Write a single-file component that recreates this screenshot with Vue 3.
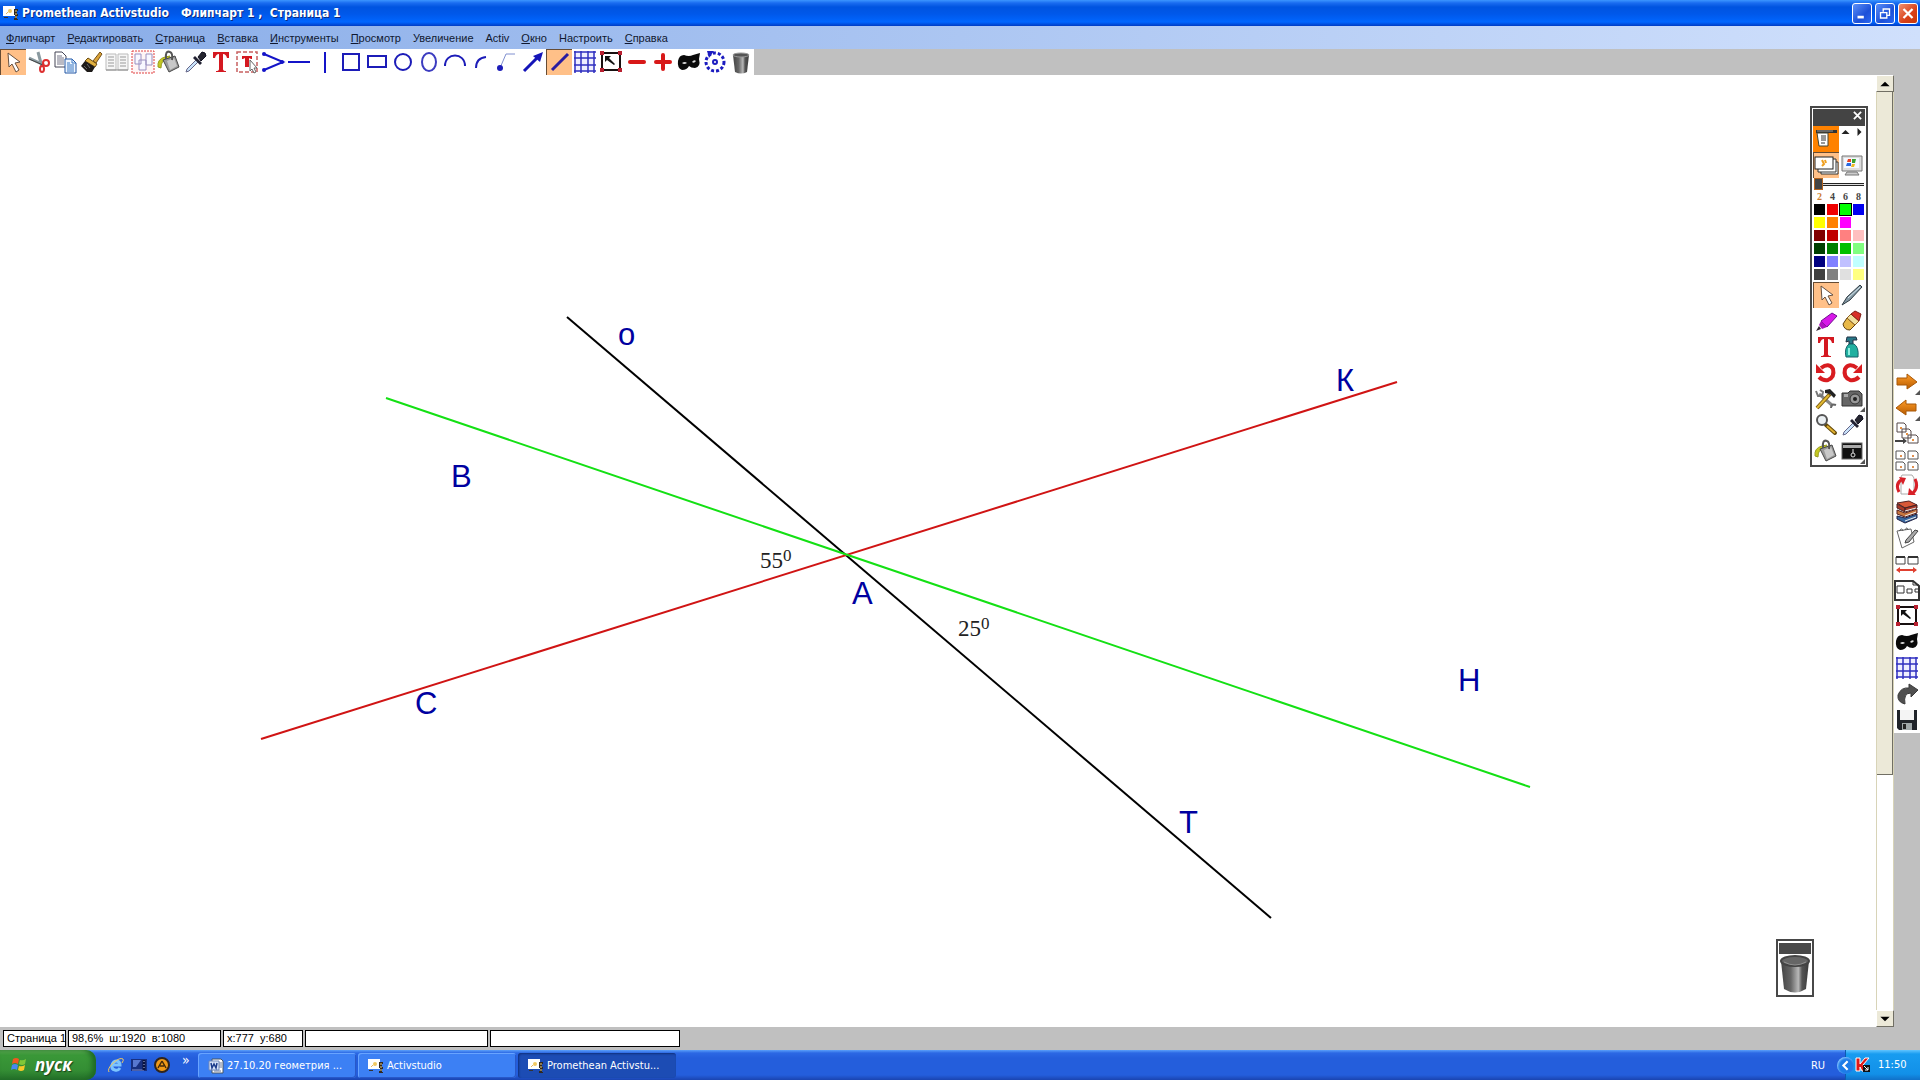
<script setup>
import { ref } from 'vue'

const menus = [
  ['Ф', 'липчарт'], ['Р', 'едактировать'], ['С', 'траница'], ['В', 'ставка'],
  ['И', 'нструменты'], ['П', 'росмотр'], ['', 'Увеличение'], ['', 'Activ'],
  ['О', 'кно'], ['', 'Настроить'], ['С', 'правка'],
]

const toolbar = [
  'pointer', 'scissors', 'copy', 'brush', 'pages', 'pick-pages', 'bucket', 'dropper',
  'text', 'text-select', 'polyline', 'hline', 'vline', 'square', 'rect', 'circle',
  'ellipse', 'arc', 'arc-small', 'connector', 'arrow', 'line', 'grid', 'resize',
  'minus', 'plus', 'mask', 'spin', 'trash',
]
const activeTools = ['pointer', 'line']

const side = [
  'next', 'prev', 'page-stack', 'page-grid', 'page-reset', 'books', 'notes',
  'page-width', 'page-tab', 'resize', 'mask', 'grid', 'redo-dark', 'save',
]

const widths = [2, 4, 6, 8]
const penWidth = ref(2)

const colors = [
  '#000000', '#f00000', '#00ff00', '#0000f0',
  '#ffff00', '#ff8000', '#ff00ff', '#ffffff',
  '#800000', '#c00000', '#ff8080', '#ffc0c0',
  '#004000', '#008000', '#00c000', '#80ff80',
  '#000080', '#8080ff', '#c0c0ff', '#c0ffff',
  '#404040', '#808080', '#e0e0e0', '#ffff80',
]
const color = ref('#00ff00')

const paletteTools = [
  'pointer', 'pen', 'marker', 'eraser', 'text', 'spray', 'undo', 'redo',
  'tools', 'camera', 'magnifier', 'dropper', 'bucket', 'drawer',
]

const labels = [
  { t: 'о', x: 618, y: 270 }, { t: 'К', x: 1336, y: 316 },
  { t: 'В', x: 451, y: 412 }, { t: 'А', x: 852, y: 529 },
  { t: 'С', x: 415, y: 639 }, { t: 'Н', x: 1458, y: 616 },
  { t: 'Т', x: 1179, y: 758 },
]
const angles = [{ t: '55', x: 760, y: 493 }, { t: '25', x: 958, y: 561 }]

const tasks = [
  { icon: 'word', text: '27.10.20 геометрия ...' },
  { icon: 'app', text: 'Activstudio' },
  { icon: 'app', text: 'Promethean Activstu...', active: true },
]
</script>

<template>
  <div class="desktop">
    <svg class="sprite" aria-hidden="true">
      <defs>
        <linearGradient id="metal" x1="0" x2="1" y1="0" y2="0">
          <stop offset="0" stop-color="#444" /><stop offset="0.35" stop-color="#666" />
          <stop offset="0.62" stop-color="#b8b8b8" /><stop offset="0.75" stop-color="#555" />
          <stop offset="1" stop-color="#3a3a3a" />
        </linearGradient>
        <linearGradient id="orange" x1="0" x2="0" y1="0" y2="1">
          <stop offset="0" stop-color="#ff9c28" /><stop offset="1" stop-color="#b85c00" />
        </linearGradient>
      </defs>
      <symbol id="i-pointer" viewBox="0 0 26 26">
        <path d="M8 4L9 18L12 15L16 23L19 21L15 14L20 13Z" fill="#fff" stroke="#665040" stroke-width="1" />
      </symbol>
      <symbol id="i-scissors" viewBox="0 0 26 26">
        <path d="M3 9L18 16M12 3L16 18" stroke="#8a9aa0" stroke-width="3" />
        <path d="M3 10L17 16" stroke="#444" stroke-width="1" />
        <circle cx="20" cy="14" r="3" fill="none" stroke="#dd3030" stroke-width="2" />
        <ellipse cx="16" cy="20" rx="2" ry="3" fill="none" stroke="#dd3030" stroke-width="2" />
      </symbol>
      <symbol id="i-copy" viewBox="0 0 26 26">
        <path d="M3 3H10L14 7V18H3Z" fill="#fff" stroke="#445" />
        <path d="M5 7H10M5 9H12M5 11H12M5 13H12M5 15H12" stroke="#778" />
        <path d="M13 10H20L24 14V24H13Z" fill="#eef6ff" stroke="#2256a4" />
        <path d="M20 10V14H24M15 14H18M15 16H22M15 18H22M15 20H22M15 22H22" fill="none" stroke="#3a78c4" />
      </symbol>
      <symbol id="i-brush" viewBox="0 0 26 26">
        <path d="M15 12L22 3L24 5L18 14Z" fill="#dba438" stroke="#74501a" />
        <path d="M10 9L19 15L17 18L7 12Z" fill="#e0b040" stroke="#6a4a10" />
        <path d="M7 12L17 18L14 23L9 23L3 17Z" fill="#1d1a18" />
        <path d="M6 17L9 20M9 15L12 19" stroke="#666" />
      </symbol>
      <symbol id="i-pages" viewBox="0 0 26 26">
        <path d="M2 5H12V21H2ZM14 5H24V21H14Z" fill="#f6f6f6" stroke="#bbb" />
        <path d="M4 8H10M4 11H10M4 14H10M4 17H10M16 8H22M16 11H22M16 14H22M16 17H22" stroke="#999" />
        <path d="M2 21H24" stroke="#888" />
      </symbol>
      <symbol id="i-pick-pages" viewBox="0 0 26 26">
        <rect x="2" y="2" width="22" height="22" fill="#fff5f5" stroke="#e04040" stroke-dasharray="2 1" />
        <path d="M5 5H11V15H5ZM16 5H22V16H16ZM9 11H16V21H9Z" fill="#f8f8ff" stroke="#9a90c0" />
      </symbol>
      <symbol id="i-bucket" viewBox="0 0 26 26">
        <path d="M2 18Q1 10 9 8L14 7L12 11Q5 10 5 19Z" fill="#c4c820" stroke="#989c20" />
        <path d="M7 11L19 7L23 18L13 23Z" fill="#999" stroke="#484848" />
        <path d="M11 12L18 9L21 17L14 21Z" fill="#c8c8c8" />
        <path d="M10 10Q9 1 14 3Q17 4 16 11" fill="none" stroke="#555" stroke-width="2" />
      </symbol>
      <symbol id="i-dropper" viewBox="0 0 26 26">
        <path d="M15 10L17 12L7 22L4 23L5 20Z" fill="#c8e2fa" stroke="#668" />
        <path d="M13 7L20 14L18 16L11 9Z" fill="#223" />
        <path d="M16 8L20 3Q24 3 24 7L19 12Z" fill="#25252f" stroke="#112" />
      </symbol>
      <symbol id="i-text" viewBox="0 0 26 26">
        <path d="M5 3H21V9H19Q18 5 15 5V20Q15 22 18 22V23H8V22Q11 22 11 20V5Q8 5 7 9H5Z" fill="#d41820" />
      </symbol>
      <symbol id="i-text-select" viewBox="0 0 26 26">
        <rect x="3" y="3" width="20" height="20" fill="none" stroke="#c86060" stroke-width="1.5" stroke-dasharray="4 2" />
        <path d="M8 7H18V10H17L15 9V18H11V9L9 10H8Z" fill="#d41820" />
        <path d="M16 11V22L18 20L20 24L22 23L20 19H23Z" fill="#fff" stroke="#666" />
      </symbol>
      <symbol id="i-polyline" viewBox="0 0 26 26">
        <path d="M4 5L23 13L4 21" fill="none" stroke="#1414c8" stroke-width="2" />
        <circle cx="4" cy="5" r="2" fill="#1414c8" /><circle cx="4" cy="21" r="2" fill="#1414c8" /><circle cx="22" cy="13" r="2" fill="#1414c8" />
      </symbol>
      <symbol id="i-hline" viewBox="0 0 26 26"><path d="M2 13H24" stroke="#1414c8" stroke-width="2" /></symbol>
      <symbol id="i-vline" viewBox="0 0 26 26"><path d="M13 3V24" stroke="#1414c8" stroke-width="2" /></symbol>
      <symbol id="i-square" viewBox="0 0 26 26"><rect x="5" y="5" width="16" height="16" fill="none" stroke="#1c1cb8" stroke-width="2" /></symbol>
      <symbol id="i-rect" viewBox="0 0 26 26"><rect x="4" y="7" width="18" height="11" fill="none" stroke="#1c1cb8" stroke-width="2" /></symbol>
      <symbol id="i-circle" viewBox="0 0 26 26"><circle cx="13" cy="13" r="8" fill="none" stroke="#1c1cb8" stroke-width="2" /></symbol>
      <symbol id="i-ellipse" viewBox="0 0 26 26"><ellipse cx="13" cy="13" rx="7" ry="9" fill="none" stroke="#3c3cc0" stroke-width="2" /></symbol>
      <symbol id="i-arc" viewBox="0 0 26 26"><path d="M3 17C3 3 23 3 23 17" fill="none" stroke="#1c1cb8" stroke-width="2" /></symbol>
      <symbol id="i-arc-small" viewBox="0 0 26 26"><path d="M8 19Q8 9 18 8" fill="none" stroke="#1c1cb8" stroke-width="2" /></symbol>
      <symbol id="i-connector" viewBox="0 0 26 26">
        <path d="M6 19L12 5H21" fill="none" stroke="#8090d0" /><circle cx="6" cy="19" r="3" fill="#1c1cb8" />
      </symbol>
      <symbol id="i-arrow" viewBox="0 0 26 26">
        <path d="M4 22L17 9" stroke="#1414b8" stroke-width="3" /><path d="M23 3L20 13L13 7Z" fill="#1414b8" />
      </symbol>
      <symbol id="i-line" viewBox="0 0 26 26"><path d="M6 21L22 5" stroke="#2a1ca0" stroke-width="3" /></symbol>
      <symbol id="i-grid" viewBox="0 0 26 26">
        <rect x="3" y="3" width="20" height="20" fill="#eef" />
        <path d="M2 3H24M2 9H24M2 16H24M2 22H24M3 2V24M9 2V24M16 2V24M22 2V24" stroke="#3030c0" stroke-width="1.5" />
      </symbol>
      <symbol id="i-resize" viewBox="0 0 26 26">
        <rect x="4" y="4" width="18" height="17" fill="#fff" stroke="#181010" stroke-width="2" />
        <path d="M7 7H13L11 9L17 15L16 16L9 11L7 13Z" fill="#111" />
        <path d="M2 2H6V6H2ZM20 2H24V6H20ZM2 19H6V23H2ZM20 19H24V23H20Z" fill="#b82030" />
      </symbol>
      <symbol id="i-minus" viewBox="0 0 26 26"><path d="M6 13H20" stroke="#d81818" stroke-width="4" stroke-linecap="round" /></symbol>
      <symbol id="i-plus" viewBox="0 0 26 26"><path d="M6 13H20M13 6V20" stroke="#d81818" stroke-width="4" stroke-linecap="round" /></symbol>
      <symbol id="i-mask" viewBox="0 0 26 26">
        <path d="M2 12Q3 6 8 6Q13 8 17 6L24 4L23 10Q25 18 19 19Q15 19 13 17Q11 21 6 21Q1 19 2 12Z" fill="#0a0a0a" />
        <path d="M6 14Q9 12 11 14Q8 16 6 14ZM16 13Q18 10 20 12Q18 15 16 13Z" fill="#ddd" />
      </symbol>
      <symbol id="i-spin" viewBox="0 0 26 26">
        <circle cx="13" cy="13" r="9" fill="none" stroke="#1c1cc0" stroke-width="3" stroke-dasharray="3 2" />
        <circle cx="13" cy="13" r="2" fill="none" stroke="#1c1cc0" stroke-width="2" /><path d="M5 2L12 2L7 9Z" fill="#1c1cc0" />
      </symbol>
      <symbol id="i-trash" viewBox="0 0 26 26">
        <path d="M5 6H21L19 23Q13 26 7 23Z" fill="url(#metal)" />
        <ellipse cx="13" cy="6" rx="8" ry="2" fill="#555" stroke="#999" />
      </symbol>
      <symbol id="i-pen" viewBox="0 0 26 26">
        <path d="M3 23L8 15L21 3L23 5L11 18Z" fill="#8498a4" stroke="#303c44" /><path d="M9 16L21 5" stroke="#d6e8ee" />
      </symbol>
      <symbol id="i-marker" viewBox="0 0 26 26">
        <path d="M8 13L19 5L24 8L14 19Z" fill="#d818e8" stroke="#701090" />
        <path d="M8 13L14 19L9 21L6 17Z" fill="#b010c0" /><path d="M6 18L8 21L3 23Z" fill="#302030" />
      </symbol>
      <symbol id="i-eraser" viewBox="0 0 26 26">
        <path d="M4 16L8 10L16 17L11 22Q5 22 4 16Z" fill="#e8b848" stroke="#604010" />
        <path d="M8 10L12 6L20 13L16 17Z" fill="#f0e0a0" stroke="#906020" />
        <path d="M12 6L16 3L22 6L20 13Z" fill="#d83028" stroke="#802018" />
      </symbol>
      <symbol id="i-spray" viewBox="0 0 26 26">
        <path d="M8 3H17L18 6H14V10H10V7L7 8Z" fill="#287888" stroke="#234" />
        <path d="M10 10H15Q20 13 19 23H7Q5 14 10 10Z" fill="#20b0a0" stroke="#166068" /><path d="M10 14V21" stroke="#90eee0" stroke-width="2" />
      </symbol>
      <symbol id="i-undo" viewBox="0 0 26 26">
        <path d="M8 8Q16 2 20 9Q22 17 15 20Q10 21 6 17" fill="none" stroke="#d81c20" stroke-width="4" /><path d="M3 4V13H12Z" fill="#d81c20" />
      </symbol>
      <symbol id="i-redo" viewBox="0 0 26 26">
        <path d="M18 8Q10 2 6 9Q4 17 11 20Q16 21 20 17" fill="none" stroke="#d81c20" stroke-width="4" /><path d="M23 4V13H14Z" fill="#d81c20" />
      </symbol>
      <symbol id="i-tools" viewBox="0 0 26 26">
        <path d="M6 8L20 20" stroke="#888" stroke-width="3" /><path d="M3 5L5 10L9 10L10 6L7 4" fill="none" stroke="#777" stroke-width="2" />
        <path d="M4 22L17 8" stroke="#795810" stroke-width="4" /><path d="M4 22L16 9" stroke="#e0b830" stroke-width="2" />
        <path d="M12 4L17 3L23 9L21 12L17 8L12 7Z" fill="#222" /><path d="M18 22Q18 17 23 19" fill="none" stroke="#666" stroke-width="2" />
      </symbol>
      <symbol id="i-camera" viewBox="0 0 26 26">
        <path d="M3 7H9L11 5H20L23 8V20H3Z" fill="#666" stroke="#333" /><path d="M5 8H9V11H5Z" fill="#aaa" />
        <circle cx="16" cy="13" r="5" fill="#999" stroke="#333" /><circle cx="16" cy="13" r="2" fill="#222" />
        <path d="M26 21V26H21Z" fill="#555" />
      </symbol>
      <symbol id="i-magnifier" viewBox="0 0 26 26">
        <path d="M13 13L22 21" stroke="#624808" stroke-width="4" stroke-linecap="round" /><path d="M14 14L22 21" stroke="#e0b030" stroke-width="2" />
        <circle cx="9" cy="8" r="5" fill="#eaeff2" stroke="#555" stroke-width="2" />
      </symbol>
      <symbol id="i-drawer" viewBox="0 0 26 26">
        <rect x="3" y="5" width="20" height="16" fill="#111" stroke="#666" /><path d="M4 7H22V10H4Z" fill="#aaa" />
        <path d="M14 11V15" stroke="#eee" /><circle cx="14" cy="17" r="2" fill="none" stroke="#ddd" /><path d="M26 21V26H21Z" fill="#555" />
      </symbol>
      <symbol id="i-next" viewBox="0 0 26 26">
        <path d="M3 9H13V5L23 13L13 20V16H3Z" fill="url(#orange)" stroke="#a85808" /><path d="M26 21V26H21Z" fill="#555" />
      </symbol>
      <symbol id="i-prev" viewBox="0 0 26 26">
        <path d="M22 9H12V5L2 13L12 20V16H22Z" fill="url(#orange)" stroke="#a85808" /><path d="M26 21V26H21Z" fill="#555" />
      </symbol>
      <symbol id="i-page-stack" viewBox="0 0 26 26">
        <path d="M3 2H10L12 4V11H3ZM8 8H15L17 10V17H8ZM14 14H22L24 16V22H14Z" fill="#fff" stroke="#554848" />
        <path d="M6 7H8M12 13H14M18 19H20" stroke="#e89040" stroke-width="2" /><path d="M1 19H9V17L13 20L9 23V21H1Z" fill="#444" />
      </symbol>
      <symbol id="i-page-grid" viewBox="0 0 26 26">
        <path d="M2 4H9L11 6V12H2ZM14 4H22L24 6V12H14ZM2 15H9L11 17V23H2ZM14 15H22L24 17V23H14Z" fill="#fff" stroke="#555" />
        <path d="M6 9H8M18 9H20M6 20H8M18 20H20" stroke="#e09050" stroke-width="2" />
      </symbol>
      <symbol id="i-page-reset" viewBox="0 0 26 26">
        <path d="M8 2H18L20 5V21H7V4Z" fill="#fff" stroke="#aaa" />
        <path d="M5 19Q1 11 7 7M21 6Q25 14 19 20" fill="none" stroke="#d82028" stroke-width="3" /><path d="M5 4L12 5L9 12ZM15 15L14 22L22 22Z" fill="#d82028" />
      </symbol>
      <symbol id="i-books" viewBox="0 0 26 26">
        <path d="M3 4L15 2L23 6L11 9Z" fill="#d85838" stroke="#522" /><path d="M3 5L11 9V13L3 9ZM11 9L23 6V9L11 13Z" fill="#a83828" stroke="#422" />
        <path d="M3 11L11 14L23 10V14L11 18L3 15Z" fill="#c87840" stroke="#522" /><path d="M3 17L11 19L23 15V19L11 24L3 20Z" fill="#3868a0" stroke="#224" />
        <path d="M11 12L22 9M11 17L22 13M11 22L22 18" stroke="#eee" />
      </symbol>
      <symbol id="i-notes" viewBox="0 0 26 26">
        <path d="M3 6L17 4L20 17L8 23Z" fill="#fff" stroke="#666" /><path d="M5 6Q8 2 9 6M11 5Q13 1 14 5" fill="none" stroke="#555" />
        <path d="M12 15L21 5L24 6L15 17L11 18Z" fill="#aaa" stroke="#444" />
      </symbol>
      <symbol id="i-page-width" viewBox="0 0 26 26">
        <path d="M2 6H11V13H2ZM14 6H24V13H14Z" fill="#fff" stroke="#444" /><path d="M2 6H11M14 6H24" stroke="#333" stroke-width="2" />
        <path d="M3 19H22" stroke="#e04030" stroke-width="2" /><path d="M6 16L2 19L6 22ZM19 16L23 19L19 22Z" fill="#e04030" />
      </symbol>
      <symbol id="i-page-tab" viewBox="0 0 26 26">
        <path d="M1 4H19L25 9V23H1Z" fill="#fff" stroke="#333" stroke-width="2" /><path d="M19 4V8H25M3 9H10V16H3ZM13 12H18V16H13ZM21 12H25V15H21Z" fill="none" stroke="#333" />
      </symbol>
      <symbol id="i-redo-dark" viewBox="0 0 26 26">
        <path d="M15 3L24 9L17 16V12Q9 12 11 23Q3 21 4 14Q7 6 15 7Z" fill="#505050" stroke="#3a3a3a" />
      </symbol>
      <symbol id="i-save" viewBox="0 0 26 26">
        <path d="M3 3H23V23H5L3 21Z" fill="#20242a" /><path d="M6 3H20V13H6Z" fill="#f4f4f4" /><path d="M8 16H18V23H8Z" fill="#a0a8aa" /><path d="M9 17H12V22H9Z" fill="#222" />
      </symbol>
      <symbol id="i-flipchart" viewBox="0 0 26 26">
        <path d="M3 4H24V7H3Z" fill="#333" /><path d="M4 5H20" stroke="#999" /><path d="M4 7H15V20H6Z" fill="#fff" stroke="#443" />
        <path d="M8 10H13M8 12H13M8 14H13M8 17H12" stroke="#333" />
      </symbol>
      <symbol id="i-slides" viewBox="0 0 26 26">
        <path d="M8 10H25V22H8Z" fill="#fff" stroke="#333" /><path d="M5 7H23V20H5Z" fill="#fff" stroke="#333" />
        <rect x="2" y="5" width="18" height="12" fill="#fff" stroke="#222" /><path d="M9 8L11 12L9 14M12 8L13 11" stroke="#f0a020" fill="none" stroke-width="2" />
      </symbol>
      <symbol id="i-monitor" viewBox="0 0 26 26">
        <path d="M3 4H23V19H3Z" fill="#ddd" stroke="#777" /><path d="M5 6H20V16H5Z" fill="#f4f8ff" /><path d="M8 20H18L20 23H6Z" fill="#ccc" stroke="#777" />
        <path d="M9 7H12V10H8Z" fill="#e84020" /><path d="M13 7H17L16 11H13Z" fill="#38a030" /><path d="M8 11H12V14H7Z" fill="#2868e0" /><path d="M13 12H16L15 15H12Z" fill="#f0b820" />
      </symbol>
      <symbol id="i-app" viewBox="0 0 16 16">
        <path d="M0 1H12V11H0Z" fill="#fff" /><path d="M1 12H5V13H1Z" fill="#333" /><circle cx="7" cy="6" r="2" fill="#f0c860" /><path d="M3 9L5 7" stroke="#e8b860" />
        <path d="M11 4H15V6H14V9H15V11H14V14H15V15H11V13H12V10H11Z" fill="#302820" /><path d="M12 6H14M12 9H14M12 12H14" stroke="#e8d080" />
      </symbol>
      <symbol id="i-word" viewBox="0 0 16 16">
        <path d="M4 1H13L15 3V15H4Z" fill="#fff" stroke="#456" /><path d="M11 5H14M11 7H14M11 9H14M6 13H13" stroke="#679" />
        <path d="M1 3H11V12H1Z" fill="#d8e4fa" stroke="#7088b8" /><path d="M3 5L4 10L6 6L8 10L9 5" fill="none" stroke="#1c3c8c" stroke-width="1.5" />
      </symbol>
      <symbol id="i-ie" viewBox="0 0 16 16">
        <path d="M12 11Q10 14 7 13Q3 12 4 8Q5 4 9 4Q12 5 12 8H5" fill="none" stroke="#7cc4ff" stroke-width="3" />
        <path d="M1 15Q-1 12 5 6Q12 0 15 2Q16 3 14 6" fill="none" stroke="#f0c860" stroke-width="1" />
      </symbol>
      <symbol id="i-desk" viewBox="0 0 16 16">
        <path d="M0 2H16V14H0Z" fill="#183080" /><path d="M2 3H10L5 10H2Z" fill="#5878d0" /><path d="M1 13H13" stroke="#8090d0" /><path d="M13 3V13" stroke="#0a1440" stroke-width="3" /><path d="M13 4V12" stroke="#b0b8e0" stroke-dasharray="1 2" />
      </symbol>
      <symbol id="i-activ" viewBox="0 0 16 16">
        <circle cx="8" cy="8" r="7" fill="#f09a18" stroke="#30241c" stroke-width="2" /><path d="M8 4L4 11M8 4L12 11M6 9H10" stroke="#402808" stroke-width="1.5" />
      </symbol>
      <symbol id="i-flag" viewBox="0 0 18 18">
        <path d="M3 3Q6 1 9 3L8 8Q5 6 2 8Z" fill="#f05820" /><path d="M10 4Q13 5 16 3L15 8Q12 10 9 8Z" fill="#80c838" />
        <path d="M2 9Q5 7 8 9L7 14Q4 12 1 14Z" fill="#4888f0" /><path d="M9 10Q12 11 15 9L14 14Q11 16 8 14Z" fill="#f8c828" />
      </symbol>
      <symbol id="i-kav" viewBox="0 0 16 16">
        <path d="M1 1H5V7L10 1H14L8 8L11 14H7L5 10V14H1Z" fill="#e01818" stroke="#fff" /><path d="M8 8H15V15H8Z" fill="#111" /><path d="M9 9L13 13M13 10V13H10" stroke="#fff" fill="none" />
      </symbol>
    </svg>

    <header class="titlebar">
      <svg class="i16"><use href="#i-app" /></svg>
      <h1 class="title">Promethean Activstudio<span class="doc">Флипчарт 1 ,&nbsp; Страница 1</span></h1>
      <button class="win" aria-label="Свернуть"><svg viewBox="0 0 20 20"><path d="M5 14H12" stroke="#fff" stroke-width="3" /></svg></button>
      <button class="win" aria-label="Восстановить"><svg viewBox="0 0 20 20"><path d="M8 8V5H15V12H12M5 9H12V15H5Z" fill="none" stroke="#fff" stroke-width="1.5" /></svg></button>
      <button class="win close" aria-label="Закрыть"><svg viewBox="0 0 20 20"><path d="M5 5L15 15M15 5L5 15" stroke="#fff" stroke-width="2.5" /></svg></button>
    </header>

    <nav class="menubar">
      <button v-for="m in menus" :key="m[1]" class="menu"><u>{{ m[0] }}</u>{{ m[1] }}</button>
    </nav>

    <div class="toolbar">
      <button v-for="t in toolbar" :key="t" class="tool" :class="{ on: activeTools.includes(t) }" :aria-label="t">
        <svg><use :href="'#i-' + t" /></svg>
      </button>
    </div>

    <main class="work">
      <section class="page">
        <svg class="drawing">
          <g fill="none" stroke-width="2">
            <path d="M567 242L1271 843" stroke="#000" />
            <path d="M261 664L1397 307" stroke="#d01414" />
            <path d="M386 323L1530 712" stroke="#14e014" />
          </g>
          <text v-for="l in labels" :key="l.t" class="point" :x="l.x" :y="l.y">{{ l.t }}</text>
          <text v-for="a in angles" :key="a.t" class="angle" :x="a.x" :y="a.y">{{ a.t }}<tspan class="sup" dy="-7">0</tspan></text>
        </svg>

        <aside class="palette">
          <div class="palette-head"><button class="x" aria-label="Закрыть панель"><svg viewBox="0 0 10 10"><path d="M1 1L9 9M9 1L1 9" stroke="#fff" stroke-width="2" /></svg></button></div>
          <div class="pair">
            <button class="tool deep" aria-label="flipchart"><svg><use href="#i-flipchart" /></svg></button>
            <span class="rollers">
              <button aria-label="Вверх"><svg viewBox="0 0 12 12"><path d="M2 8L6 4L10 8Z" fill="#222" /></svg></button>
              <button aria-label="Вправо"><svg viewBox="0 0 12 12"><path d="M5 2L9 6L5 10Z" fill="#222" /></svg></button>
            </span>
          </div>
          <div class="pair">
            <button class="tool on" aria-label="slides"><svg><use href="#i-slides" /></svg></button>
            <button class="tool" aria-label="monitor"><svg><use href="#i-monitor" /></svg></button>
          </div>
          <input class="slider" type="range" min="2" max="30" v-model="penWidth" aria-label="Толщина пера" />
          <div class="widths">
            <button v-for="w in widths" :key="w" :class="{ cur: w == penWidth }" @click="penWidth = w">{{ w }}</button>
          </div>
          <div class="colors">
            <button v-for="c in colors" :key="c" :class="{ cur: c === color }" :style="{ backgroundColor: c }" :aria-label="c" @click="color = c"></button>
          </div>
          <div class="pair">
            <button v-for="t in paletteTools" :key="t" class="tool" :class="{ on: t === 'pointer' }" :aria-label="t">
              <svg><use :href="'#i-' + t" /></svg>
            </button>
          </div>
        </aside>

        <button class="bin" aria-label="Корзина">
          <span class="bin-head"></span>
          <svg viewBox="0 0 32 40">
            <path d="M2 7L5 35Q16 42 27 35L30 7Z" fill="url(#metal)" />
            <ellipse cx="16" cy="7" rx="14" ry="5" fill="#666" stroke="#444" stroke-width="2" /><path d="M5 8Q16 14 27 8" fill="none" stroke="#909090" />
          </svg>
        </button>
      </section>

      <div class="scroll">
        <button aria-label="Прокрутить вверх"><svg viewBox="0 0 12 12"><path d="M2 8L6 4L10 8Z" /></svg></button>
        <div class="track"><div class="thumb"></div></div>
        <button aria-label="Прокрутить вниз"><svg viewBox="0 0 12 12"><path d="M2 4L6 8L10 4Z" /></svg></button>
      </div>

      <div class="side">
        <div class="side-tools">
          <button v-for="t in side" :key="t" class="tool" :aria-label="t"><svg><use :href="'#i-' + t" /></svg></button>
        </div>
      </div>
    </main>

    <footer class="status">
      <span class="cell c1">Страница 1</span>
      <span class="cell c2">98,6%&nbsp; ш:1920&nbsp; в:1080</span>
      <span class="cell c3">x:777&nbsp; y:680</span>
      <span class="cell c4"></span>
      <span class="cell c5"></span>
    </footer>

    <div class="taskbar">
      <button class="start"><svg><use href="#i-flag" /></svg>пуск</button>
      <div class="quick">
        <button aria-label="Internet Explorer"><svg class="i16"><use href="#i-ie" /></svg></button>
        <button aria-label="Рабочий стол"><svg class="i16"><use href="#i-desk" /></svg></button>
        <button aria-label="Activ"><svg class="i16"><use href="#i-activ" /></svg></button>
        <button class="more">»</button>
      </div>
      <button v-for="t in tasks" :key="t.text" class="task" :class="{ active: t.active }">
        <svg class="i16"><use :href="'#i-' + t.icon" /></svg>{{ t.text }}
      </button>
      <span class="lang">RU</span>
      <div class="tray">
        <button class="chev" aria-label="Показать значки"><svg viewBox="0 0 16 16"><path d="M10 4L6 8L10 12" fill="none" stroke="#fff" stroke-width="2" /></svg></button>
        <svg class="i16"><use href="#i-kav" /></svg>
        <time>11:50</time>
      </div>
    </div>
  </div>
</template>

<style>
body { margin: 0; background: #c0c0c0; }
</style>

<style scoped>
.desktop { display: flex; flex-direction: column; min-height: 100vh; overflow: hidden; background: #c0c0c0; font-family: "Liberation Sans", Arial, sans-serif; font-size: 11px; color: #000; }
.sprite { position: absolute; width: 0; height: 0; }
button { display: block; margin: 0; padding: 0; border: 0; background: none; font: inherit; color: inherit; box-sizing: border-box; }
svg { display: block; }
.i16 { flex: none; width: 16px; height: 16px; }

.titlebar { display: flex; align-items: center; gap: 3px; height: 26px; padding: 0 2px 0 3px; background: linear-gradient(#3c96ff 0, #1a6cf0 3px, #0054e0 7px, #0058ea 14px, #0066ff 22px, #003cc4 26px); }
.title { flex: 1; margin: 0; font: bold 12px/20px "DejaVu Sans Condensed", "Noto Sans", sans-serif; color: #fff; text-shadow: 1px 1px #0a2a80; white-space: nowrap; }
.doc { margin-left: 12px; }
.win { width: 20px; height: 21px; border: 1px solid #fff; border-radius: 3px; background: linear-gradient(135deg, #5c90f8, #1c50d8 60%, #2c68f0); }
.win svg { width: 18px; height: 19px; }
.close { background: linear-gradient(135deg, #f09070, #d84018 60%, #c83808); }

.menubar { display: flex; align-items: center; gap: 12px; height: 23px; padding: 0 6px; background: linear-gradient(90deg, #88ace8, #d0e0fc); }
.menu { line-height: 20px; white-space: nowrap; color: #101830; }

.toolbar { display: flex; align-self: flex-start; height: 26px; background: #fff; }
.tool { width: 26px; height: 26px; }
.tool svg { width: 26px; height: 26px; }
.tool.on { background: #ffc088; box-shadow: inset 1px 1px #664c34; }
.tool.deep { background: #ff8200; }

.work { flex: 1; display: flex; min-height: 480px; }
.page { position: relative; flex: 1; min-width: 0; background: #fff; overflow: hidden; }
.drawing { width: 100%; height: 100%; position: absolute; inset: 0; }
.point { font-size: 31px; fill: #0000a0; }
.angle { font-family: "Liberation Serif", "Times New Roman", serif; font-size: 23px; fill: #222; }
.sup { font-size: 17px; }

.palette { position: absolute; top: 31px; right: 8px; width: 52px; padding: 1px; border: 2px solid #484848; background: #fff; }
.palette-head { display: flex; justify-content: flex-end; height: 17px; background: #444; }
.x { width: 15px; height: 12px; }
.x svg { width: 9px; height: 9px; margin: 2px 3px; }
.pair { display: flex; flex-wrap: wrap; }
.rollers { display: flex; width: 26px; }
.rollers button { width: 13px; height: 12px; }
.rollers svg { width: 13px; height: 12px; }
.slider { display: block; appearance: none; width: 50px; height: 12px; margin: 0 1px; background: linear-gradient(#fff 5px, #222 5px, #222 6px, #ddd 6px, #ddd 7px, #222 7px, #222 8px, #fff 8px); }
.slider::-webkit-slider-thumb { appearance: none; width: 9px; height: 12px; background: #444; border: 1px solid #b46420; }
.widths { display: flex; height: 13px; }
.widths button { width: 13px; font: bold 10px/14px "Liberation Serif", serif; text-align: center; color: #444; }
.widths .cur { color: #d08030; }
.colors { display: grid; grid-template-columns: repeat(4, 11px); gap: 2px; padding: 1px 1px 2px; }
.colors button { height: 11px; }
.colors .cur { outline: 1px solid #000; }

.bin { position: absolute; right: 62px; bottom: 30px; width: 38px; height: 58px; padding: 1px; border: 2px solid #484848; background: #fff; }
.bin-head { display: block; height: 11px; background: #484848; }
.bin svg { width: 32px; height: 40px; }

.scroll { display: flex; flex-direction: column; width: 18px; background: #fff; }
.scroll button { width: 18px; height: 17px; background: #ece9d8; border: 1px solid; border-color: #fff #716f64 #716f64 #fff; }
.scroll button svg { width: 14px; height: 14px; margin: 0 auto; }
.track { flex: 1; box-sizing: border-box; border: solid #d8d4b8; border-width: 0 1px; }
.thumb { height: 74.4%; background: #ece9d8; border-right: 1px solid #716f64; border-bottom: 1px solid #716f64; box-sizing: border-box; }

.side { display: flex; flex-direction: column; width: 26px; padding-top: 294px; box-sizing: border-box; }
.side-tools { background: #fff; }

.status { display: flex; align-items: center; gap: 2px; height: 23px; padding: 0 3px; }
.cell { box-sizing: border-box; height: 17px; padding: 0 3px; border: 1px solid #000; background: #fff; line-height: 15px; white-space: nowrap; }
.c1 { width: 63px; }
.c2 { width: 153px; }
.c3 { width: 80px; }
.c4 { width: 183px; }
.c5 { width: 190px; }

.taskbar { display: flex; align-items: stretch; height: 30px; background: linear-gradient(#5aa0fa 0, #2c68e4 3px, #245edc 8px, #245edc 25px, #1a44b0 30px); color: #fff; font: 11px/14px "DejaVu Sans Condensed", Tahoma, sans-serif; }
.start { display: flex; align-items: center; gap: 7px; width: 96px; padding: 0 0 0 10px; border-radius: 0 10px 10px 0; background: linear-gradient(#62b058 0, #3a9838 5px, #348e34 20px, #24702a 30px); box-shadow: inset -4px 0 5px #1f6a24; font: italic bold 17px/20px "Open Sans", sans-serif; text-shadow: 1px 1px 1px #1a401a; }
.start svg { width: 18px; height: 18px; }
.quick { display: flex; align-items: center; gap: 7px; width: 102px; padding-left: 12px; box-sizing: border-box; }
.more { align-self: flex-start; height: 20px; padding: 1px 5px; font-size: 14px; }
.task { display: flex; align-items: center; gap: 3px; width: 158px; height: 25px; margin: 3px 2px 0 0; padding: 0 10px; border-radius: 3px; background: #3c80f4; box-shadow: inset 1px 1px #68a4ff, inset -1px -1px #2858c8; white-space: nowrap; }
.task.active { background: #1c4cb4; box-shadow: inset 1px 1px 2px #10307c; }
.lang { margin-left: auto; padding: 0 9px; line-height: 31px; }
.tray { position: relative; display: flex; align-items: center; gap: 7px; width: 75px; margin-left: 11px; padding-left: 9px; box-sizing: border-box; background: linear-gradient(#60c4ff 0, #189cf0 4px, #1290e8 24px, #1070c8 30px); border-left: 1px solid #0c5cb0; }
.chev { position: absolute; left: -9px; width: 17px; height: 17px; border-radius: 9px; background: #1c7ce8; box-shadow: inset 1px 1px 2px #8cc8ff; }
.chev svg { width: 17px; height: 17px; }
</style>
